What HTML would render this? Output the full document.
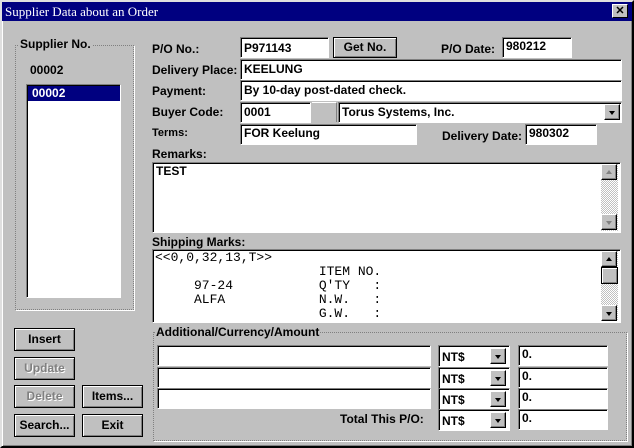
<!DOCTYPE html>
<html><head><meta charset="utf-8"><style>
*{box-sizing:border-box;margin:0;padding:0}
body{width:634px;height:448px;background:#c0c0c0;position:relative;overflow:hidden;font:bold 12px "Liberation Sans",sans-serif;color:#000}
.a{position:absolute}
.win{left:0;top:0;width:634px;height:448px;border:2px solid;border-color:#dfdfdf #000 #000 #dfdfdf;box-shadow:inset 1px 1px #fff,inset -1px -1px #808080}
.title{left:2px;top:2px;width:630px;height:19px;background:#000080;color:#fff;font:13px "Liberation Serif",serif;padding:2px 3px}
.x{left:612px;top:4px;width:16px;height:14px;background:#c0c0c0;border:1px solid;border-color:#fff #000 #000 #fff;color:#000;font:bold 11px "Liberation Sans";text-align:center;line-height:12px}
.in{background:#fff;border:1px solid;border-color:#808080 #fff #fff #808080;box-shadow:inset 1px 1px #000;padding:3px 3px 0;line-height:14px;white-space:nowrap}
.btn{background:#c0c0c0;border:1px solid #000;box-shadow:inset 1px 1px #fff,inset -1px -1px #808080;text-align:center;line-height:20px}
.grp{border:1px dotted #808080;box-shadow:1px 1px #fff}
.lab{background:#c0c0c0;padding:0 1px;line-height:13px}
.arr{width:16px;height:16px;background:#c0c0c0;border:1px solid;border-color:#fff #000 #000 #fff;box-shadow:inset -1px -1px #808080}
.arr:after{content:"";position:absolute;left:4px;top:6px;border:3px solid transparent;border-top:4px solid #000;border-bottom:0}
.up:after{border-top:0;border-bottom:4px solid #000;top:5px}
.dis:after{border-top-color:#808080}.dis.up:after{border-bottom-color:#808080}
.sb{width:17px;background:repeating-conic-gradient(#fff 0 25%,#c0c0c0 0 50%) 0 0/2px 2px}
.mono{font:13px "Liberation Mono",monospace;line-height:14px;white-space:pre;font-weight:normal}
.dtx{color:#808080;text-shadow:1px 1px #fff}
</style></head><body>
<div class="a win"></div>
<div class="a title">Supplier Data about an Order</div>
<div class="a x">✕</div>

<div class="a grp" style="left:15px;top:45px;width:119px;height:265px"></div>
<div class="a lab" style="left:19px;top:38px">Supplier No.</div>
<div class="a" style="left:30px;top:63px">00002</div>
<div class="a in" style="left:26px;top:84px;width:95px;height:214px;padding:0"><div style="background:#000080;color:#fff;height:15px;margin:1px 0 0 1px;padding-left:4px;line-height:15px">00002</div></div>

<div class="a btn" style="left:14px;top:328px;width:61px;height:23px">Insert</div>
<div class="a btn dtx" style="left:14px;top:357px;width:61px;height:23px">Update</div>
<div class="a btn dtx" style="left:14px;top:385px;width:61px;height:23px">Delete</div>
<div class="a btn" style="left:82px;top:385px;width:61px;height:23px">Items...</div>
<div class="a btn" style="left:14px;top:414px;width:61px;height:23px">Search...</div>
<div class="a btn" style="left:82px;top:414px;width:61px;height:23px">Exit</div>

<div class="a" style="left:152px;top:42px">P/O No.:</div>
<div class="a in" style="left:240px;top:37px;width:89px;height:21px">P971143</div>
<div class="a btn" style="left:333px;top:37px;width:64px;height:21px;line-height:18px">Get No.</div>
<div class="a" style="left:441px;top:42px">P/O Date:</div>
<div class="a in" style="left:502px;top:37px;width:70px;height:21px;padding-top:1px">980212</div>

<div class="a" style="left:152px;top:63px">Delivery Place:</div>
<div class="a in" style="left:240px;top:59px;width:382px;height:21px;padding-top:2px">KEELUNG</div>
<div class="a" style="left:152px;top:84px">Payment:</div>
<div class="a in" style="left:240px;top:80px;width:382px;height:21px;padding-top:2px">By 10-day post-dated check.</div>
<div class="a" style="left:152px;top:105px">Buyer Code:</div>
<div class="a in" style="left:240px;top:102px;width:71px;height:21px;padding-top:2px">0001</div>
<div class="a" style="left:312px;top:102px;width:25px;height:20px;border-right:1px solid #808080;border-top:1px solid #fff"></div>
<div class="a in" style="left:338px;top:102px;width:284px;height:21px;padding-top:2px">Torus Systems, Inc.</div>
<div class="a arr" style="left:604px;top:104px"></div>
<div class="a" style="left:152px;top:127px;font-size:11px">Terms:</div>
<div class="a in" style="left:240px;top:124px;width:177px;height:21px;padding-top:1px">FOR Keelung</div>
<div class="a" style="left:442px;top:129px">Delivery Date:</div>
<div class="a in" style="left:525px;top:124px;width:72px;height:21px;padding-top:1px">980302</div>

<div class="a" style="left:152px;top:147px">Remarks:</div>
<div class="a in" style="left:152px;top:162px;width:469px;height:71px;padding-top:1px">TEST</div>
<div class="a sb" style="left:601px;top:164px;height:67px"></div>
<div class="a arr up dis" style="left:601px;top:164px"></div>
<div class="a arr dis" style="left:601px;top:214px"></div>

<div class="a" style="left:152px;top:235px">Shipping Marks:</div>
<div class="a in mono" style="left:152px;top:249px;width:469px;height:74px;padding:1px 2px">&lt;&lt;0,0,32,13,T&gt;&gt;
                     ITEM NO.
     97-24           Q'TY   :
     ALFA            N.W.   :
                     G.W.   :</div>
<div class="a sb" style="left:601px;top:251px;height:70px"></div>
<div class="a arr up" style="left:601px;top:251px"></div>
<div class="a btn" style="left:601px;top:267px;width:17px;height:17px"></div>
<div class="a arr" style="left:601px;top:305px"></div>

<div class="a grp" style="left:153px;top:332px;width:474px;height:109px"></div>
<div class="a lab" style="left:155px;top:326px">Additional/Currency/Amount</div>

<div class="a in" style="left:157px;top:345px;width:274px;height:21px"></div>
<div class="a in" style="left:157px;top:367px;width:274px;height:21px"></div>
<div class="a in" style="left:157px;top:388px;width:274px;height:21px"></div>
<div class="a" style="left:340px;top:412px">Total This P/O:</div>

<div class="a in" style="left:438px;top:345px;width:72px;height:22px;padding-top:4px">NT$</div><div class="a arr" style="left:490px;top:348px"></div>
<div class="a in" style="left:438px;top:367px;width:72px;height:22px;padding-top:4px">NT$</div><div class="a arr" style="left:490px;top:370px"></div>
<div class="a in" style="left:438px;top:388px;width:72px;height:22px;padding-top:4px">NT$</div><div class="a arr" style="left:490px;top:391px"></div>
<div class="a in" style="left:438px;top:409px;width:72px;height:22px;padding-top:4px">NT$</div><div class="a arr" style="left:490px;top:412px"></div>

<div class="a in" style="left:518px;top:345px;width:90px;height:21px;padding-top:1px">0.</div>
<div class="a in" style="left:518px;top:367px;width:90px;height:21px;padding-top:1px">0.</div>
<div class="a in" style="left:518px;top:388px;width:90px;height:21px;padding-top:1px">0.</div>
<div class="a in" style="left:518px;top:409px;width:90px;height:21px;padding-top:1px">0.</div>
</body></html>
